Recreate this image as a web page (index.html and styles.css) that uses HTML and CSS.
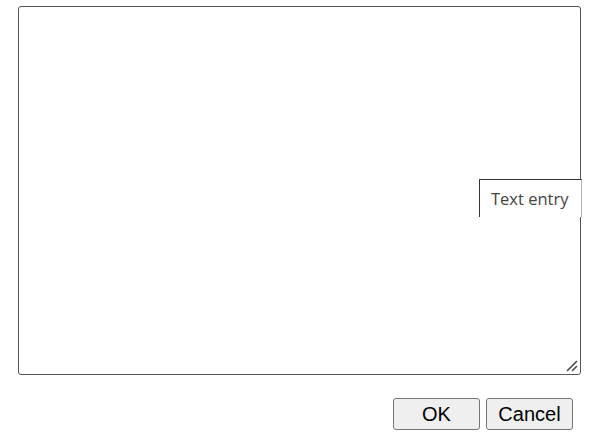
FILE: index.html
```html
<!DOCTYPE html>
<html>
<head>
<meta charset="utf-8">
<link rel="stylesheet" href="styles.css">
</head>
<body>
<div class="dialog">
  <div class="entry">
    <textarea class="text"></textarea>
    <div class="label">Text entry</div>
    <svg class="grip" width="16" height="16" viewBox="0 0 16 16" aria-hidden="true">
      <path d="M3.5 12.5 L12.5 3.5 M8.5 12.5 L12.5 8.5" stroke="#4a4a4a" stroke-width="1.6" stroke-linecap="round" fill="none"/>
    </svg>
  </div>
  <div class="actions">
    <button class="btn">OK</button>
    <button class="btn">Cancel</button>
  </div>
</div>
</body>
</html>
```
FILE: styles.css
```css
html, body {
  margin: 0;
  background: #ffffff;
}
.dialog {
  padding: 6px 0 0 18px;
  width: 563px;
}
.entry {
  position: relative;
  width: 563px;
  height: 369px;
}
.text {
  display: block;
  box-sizing: border-box;
  width: 563px;
  height: 369px;
  margin: 0;
  border: 1px solid #555;
  border-radius: 3px;
  background: #fff;
  resize: none;
}
.grip {
  position: absolute;
  left: 546px;
  top: 352px;
  pointer-events: none;
}
.label {
  position: absolute;
  left: 461px;
  top: 173px;
  box-sizing: border-box;
  width: 103px;
  height: 38px;
  background: #fff;
  border-top: 1px solid #333;
  border-left: 1px solid #333;
  border-right: 1px solid #b4b4b4;
  padding: 8px 0 0 11px;
  font-family: "Open Sans", sans-serif;
  font-size: 16.5px;
  line-height: 22px;
  color: #444;
}
.actions {
  display: flex;
  justify-content: flex-end;
  gap: 6px;
  margin-top: 23px;
  padding-right: 8px;
}
.btn {
  box-sizing: border-box;
  width: 87px;
  height: 32px;
  margin: 0;
  padding: 0;
  border: 1px solid #767676;
  border-radius: 3px;
  background: #efefef;
  font-family: "Liberation Sans", Arial, sans-serif;
  font-size: 20px;
  color: #000;
}
```
